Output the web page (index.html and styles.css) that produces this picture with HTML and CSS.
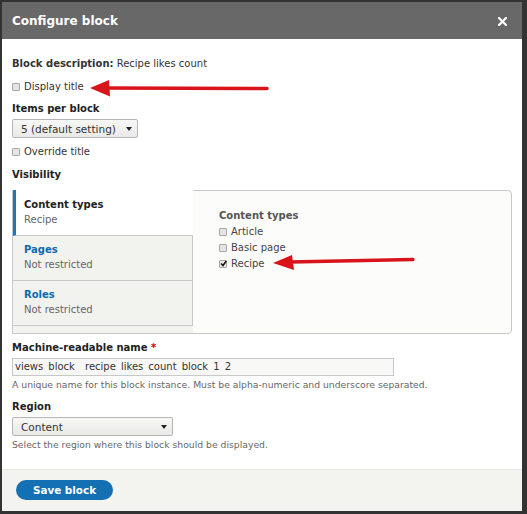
FILE: index.html
```html
<!DOCTYPE html>
<html>
<head>
<meta charset="utf-8">
<link rel="stylesheet" href="styles.css">
</head>
<body>
<div class="dialog">
  <div class="titlebar">
    <span class="title">Configure block</span>
    <svg class="close" width="9" height="9" viewBox="0 0 9 9"><path d="M1 1L8 8M8 1L1 8" stroke="#fff" stroke-width="2.2" stroke-linecap="square"/></svg>
  </div>
  <div class="content">
    <div class="row"><b>Block description:</b> Recipe likes count</div>
    <div class="row check mt9"><span class="cb"></span>Display title</div>
    <div class="row label mt8">Items per block</div>
    <div class="select sel1"><span>5 (default setting)</span><span class="caret"></span></div>
    <div class="row check mt7"><span class="cb"></span>Override title</div>
    <div class="row label mt9">Visibility</div>
    <div class="vtabs">
      <ul class="menu">
        <li class="tab active"><div class="tab-title">Content types</div><div class="tab-sum">Recipe</div></li>
        <li class="tab"><div class="tab-title link">Pages</div><div class="tab-sum">Not restricted</div></li>
        <li class="tab"><div class="tab-title link">Roles</div><div class="tab-sum">Not restricted</div></li>
      </ul>
      <div class="pane">
        <div class="pane-head">Content types</div>
        <div class="opts">
          <div class="opt"><span class="cb"></span>Article</div>
          <div class="opt"><span class="cb"></span>Basic page</div>
          <div class="opt"><span class="cb checked"><svg width="7" height="7" viewBox="0 0 7 7"><path d="M1 3.5L3 5.5L6.3 1" stroke="#111" stroke-width="1.5" fill="none"/></svg></span>Recipe</div>
        </div>
      </div>
    </div>
    <div class="row label mt7">Machine-readable name <span class="req">*</span></div>
    <div class="input">views block  recipe likes count block 1 2</div>
    <div class="desc">A unique name for this block instance. Must be alpha-numeric and underscore separated.</div>
    <div class="row label mt9">Region</div>
    <div class="select sel2"><span>Content</span><span class="caret"></span></div>
    <div class="desc">Select the region where this block should be displayed.</div>
  </div>
  <div class="footer">
    <button class="btn">Save block</button>
  </div>
</div>
<svg class="arrows" width="527" height="514" viewBox="0 0 527 514">
  <line x1="106" y1="88" x2="267" y2="88.5" stroke="#d8141a" stroke-width="3.6" stroke-linecap="round"/>
  <polygon points="90,88 109,80 110,96.5" fill="#d8141a"/>
  <line x1="290" y1="262" x2="413" y2="259.5" stroke="#d8141a" stroke-width="3.4" stroke-linecap="round"/>
  <polygon points="273,263 292,255 294,270" fill="#d8141a"/>
</svg>
</body>
</html>
```

FILE: styles.css
```css
html, body {
  margin: 0;
  padding: 0;
}
body {
  background: #333;
  width: 527px;
  height: 514px;
  overflow: hidden;
  font-family: "DejaVu Sans", Verdana, sans-serif;
  font-size: 10px;
  color: #333;
  position: relative;
}
.dialog {
  margin: 2px 0 0 2px;
  width: 520px;
  height: 509px;
  background: #fff;
  display: flex;
  flex-direction: column;
}
.titlebar {
  height: 37px;
  background: #686868;
  display: flex;
  align-items: center;
  justify-content: space-between;
  padding: 0 15px 0 10px;
}
.title {
  color: #fff;
  font-weight: bold;
  font-size: 12px;
  margin-top: 1px;
}
.close {
  display: block;
  margin-top: 1px;
}
.content {
  flex: 1;
  padding: 18px 10px 0 10px;
}
.row {
  line-height: 14px;
  height: 14px;
}
.label {
  font-weight: bold;
  color: #222;
}
.check {
  display: flex;
  align-items: center;
}
.mt7 { margin-top: 7px; }
.mt8 { margin-top: 8px; }
.mt9 { margin-top: 9px; }
.cb {
  display: inline-block;
  box-sizing: border-box;
  width: 8px;
  height: 8px;
  border: 1px solid #a8a8a8;
  background: #e4e4e4;
  border-radius: 1px;
  margin-right: 4px;
  position: relative;
}
.cb.checked {
  background: #e8e8e8;
}
.cb svg {
  position: absolute;
  left: 0;
  top: -1px;
}
.select {
  box-sizing: border-box;
  margin-top: 3px;
  height: 19px;
  border: 1px solid #b5b5b5;
  border-radius: 2px;
  background: linear-gradient(#f7f7f5, #e9e9e6);
  display: flex;
  align-items: center;
  justify-content: space-between;
  padding: 0 5px 0 8px;
  font-size: 10.5px;
  color: #333;
}
.sel1 { width: 126px; }
.sel2 { width: 161px; }
.caret {
  width: 0;
  height: 0;
  border-left: 3px solid transparent;
  border-right: 3px solid transparent;
  border-top: 4px solid #222;
}
.vtabs {
  margin-top: 8px;
  height: 144px;
  display: flex;
}
.menu {
  list-style: none;
  margin: 0 -1px 0 0;
  padding: 0;
  width: 181px;
  box-sizing: border-box;
  border: 1px solid #c8c8c8;
  border-right: none;
  background: #f2f2ef;
  position: relative;
  z-index: 1;
}
.tab {
  height: 45px;
  box-sizing: border-box;
  padding: 6px 10px 0 11px;
  border-bottom: 1px solid #c8c8c8;
  border-right: 1px solid #c8c8c8;
  background: #f2f2ef;
}
.tab.active {
  background: #fff;
  border-right: none;
  border-left: 3px solid #1e77b9;
  padding-left: 8px;
  height: 46px;
  margin-top: -1px;
  padding-top: 7px;
}
.tab-title {
  font-weight: bold;
  color: #222;
  line-height: 15px;
}
.tab-title.link {
  color: #0b6aae;
}
.tab-sum {
  color: #666;
  line-height: 15px;
}
.pane {
  flex: 1;
  box-sizing: border-box;
  border: 1px solid #c8c8c8;
  border-radius: 0 4px 4px 0;
  background: #fcfcfa;
  padding: 18px 0 0 26px;
}
.pane-head {
  font-weight: bold;
  color: #555;
  line-height: 14px;
}
.opts {
  margin-top: 1px;
}
.opt {
  line-height: 16px;
  height: 16px;
  display: flex;
  align-items: center;
  color: #444;
}
.req {
  color: #d40000;
}
.input {
  box-sizing: border-box;
  margin-top: 3px;
  width: 382px;
  height: 18px;
  border: 1px solid #c8c8c8;
  background: #f8f8f6;
  padding: 0 0 0 2px;
  line-height: 16px;
  white-space: pre;
  word-spacing: 1.9px;
  font-size: 10px;
  color: #333;
}
.desc {
  margin-top: 3px;
  font-size: 9.25px;
  line-height: 12px;
  color: #666;
  white-space: nowrap;
}
.footer {
  height: 42px;
  box-sizing: border-box;
  background: #f3f3f0;
  border-top: 1px solid #e8e8e4;
  padding: 10px 0 0 14px;
}
.btn {
  display: block;
  width: 97px;
  height: 20px;
  border: none;
  border-radius: 10px;
  background: #1371b3;
  color: #fff;
  font-family: "DejaVu Sans", Verdana, sans-serif;
  font-weight: bold;
  font-size: 10.4px;
  padding: 0;
}
.arrows {
  position: absolute;
  left: 0;
  top: 0;
  pointer-events: none;
}
```
